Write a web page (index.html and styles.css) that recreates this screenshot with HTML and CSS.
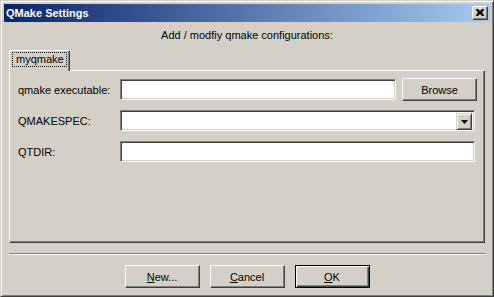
FILE: index.html
```html
<!DOCTYPE html>
<html>
<head>
<meta charset="utf-8">
<link rel="stylesheet" href="styles.css">
</head>
<body>
<div class="window">
  <div class="titlebar">
    <span class="title">QMake Settings</span>
    <span class="close-btn">
      <svg width="8" height="7" viewBox="0 0 8 7"><path d="M0 0h2l2 2 2-2h2v1l-2 2.5 2 2.5v1h-2l-2-2-2 2h-2v-1l2-2.5-2-2.5z" fill="#000"/></svg>
    </span>
  </div>
  <div class="heading">Add / modfiy qmake configurations:</div>
  <div class="tabs">
    <div class="tab"><span class="tab-focus">myqmake</span></div>
  </div>
  <div class="panel">
    <div class="form">
      <label class="label">qmake executable:</label>
      <div class="field"></div>
      <button class="btn">Browse</button>
      <label class="label">QMAKESPEC:</label>
      <div class="field combo wide"><span class="combo-btn"><svg width="7" height="4" viewBox="0 0 7 4"><path d="M0 0h7L3.5 4z" fill="#000"/></svg></span></div>
      <label class="label">QTDIR:</label>
      <div class="field wide"></div>
    </div>
  </div>
  <div class="separator"></div>
  <div class="actions">
    <button class="btn"><u>N</u>ew...</button>
    <button class="btn"><u>C</u>ancel</button>
    <button class="btn default"><u>O</u>K</button>
  </div>
</div>
</body>
</html>
```
FILE: styles.css
```css
* { box-sizing: border-box; }
html, body { margin: 0; padding: 0; background: #d4d0c8; }
body { font-family: "Liberation Sans", Arial, sans-serif; font-size: 11px; color: #000; }

.window {
  width: 494px;
  height: 297px;
  background: #d4d0c8;
  border: 1px solid;
  border-color: #d4d0c8 #404040 #404040 #d4d0c8;
  box-shadow: inset 1px 1px 0 #fff, inset -1px -1px 0 #808080;
  padding: 3px;
  display: flex;
  flex-direction: column;
}

.titlebar {
  height: 18px;
  background: linear-gradient(to right, #0a246a, #a6caf0);
  display: flex;
  align-items: center;
  justify-content: space-between;
  padding: 0 2px 0 2px;
}
.title { color: #fff; font-weight: bold; font-size: 11px; }
.close-btn {
  width: 16px;
  height: 14px;
  background: #d4d0c8;
  border: 1px solid;
  border-color: #fff #404040 #404040 #fff;
  box-shadow: inset -1px -1px 0 #808080;
  display: flex;
  align-items: center;
  justify-content: center;
  padding-bottom: 1px;
}

.heading {
  height: 18px;
  margin-top: 4px;
  line-height: 18px;
  text-align: center;
}

.tabs {
  margin: 6px 5px 0 5px;
  display: flex;
  height: 21px;
  position: relative;
  z-index: 1;
  margin-bottom: -1px;
}
.tab {
  width: 61px;
  height: 21px;
  background: #d4d0c8;
  border: 1px solid;
  border-bottom: none;
  border-color: #fff #404040 #d4d0c8 #fff;
  border-radius: 2px 2px 0 0;
  box-shadow: inset -1px 0 0 #808080;
  padding: 1px 2px 0 2px;
}
.tab-focus {
  display: block;
  height: 15px;
  line-height: 13px;
  border: 1px dotted #000;
  padding: 0 3px;
}

.panel {
  margin: 0 5px;
  height: 173px;
  border: 1px solid;
  border-color: #fff #404040 #404040 #fff;
  box-shadow: inset -1px -1px 0 #808080;
  padding: 7px 7px 0 8px;
}

.form {
  display: grid;
  grid-template-columns: 97px 1fr 75px;
  grid-auto-rows: 23px;
  column-gap: 5px;
  row-gap: 8px;
  align-items: center;
}
.field {
  height: 21px;
  background: #fff;
  border: 1px solid;
  border-color: #808080 #fff #fff #808080;
  box-shadow: inset 1px 1px 0 #404040, inset -1px -1px 0 #d4d0c8;
  margin-right: 1px;
}
.field.wide { grid-column: 2 / 4; margin-right: 2px; }
.combo { display: flex; justify-content: flex-end; padding: 2px; }
.combo-btn {
  width: 16px;
  height: 17px;
  background: #d4d0c8;
  border: 1px solid;
  border-color: #d4d0c8 #404040 #404040 #d4d0c8;
  box-shadow: inset 1px 1px 0 #fff, inset -1px -1px 0 #808080;
  display: flex;
  align-items: center;
  justify-content: center;
}

.btn {
  font: inherit;
  color: #000;
  width: 75px;
  height: 23px;
  background: #d4d0c8;
  border: 1px solid;
  border-color: #fff #404040 #404040 #fff;
  box-shadow: inset -1px -1px 0 #808080;
  padding: 0;
  margin: 0;
}
.btn.default {
  border: 1px solid #000;
  box-shadow: inset 1px 1px 0 #fff, inset -1px -1px 0 #404040, inset -2px -2px 0 #808080;
}

.separator {
  margin: 10px 5px 0 5px;
  height: 2px;
  border-top: 1px solid #808080;
  border-bottom: 1px solid #fff;
}

.actions {
  margin-top: 10px;
  display: flex;
  justify-content: center;
  gap: 10px;
}
```
